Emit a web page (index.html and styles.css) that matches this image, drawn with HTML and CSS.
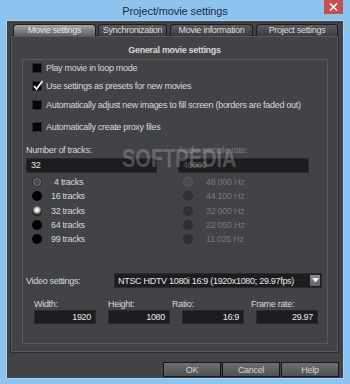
FILE: index.html
```html
<!DOCTYPE html>
<html lang="en">
<head>
  <meta charset="UTF-8" />
  <title>Project/movie settings</title>
  <link rel="stylesheet" href="styles.css">
</head>
<body>

  <div id="janela">
    <div class="titlebar">
      <span class="title">Project/movie settings</span>
      <div class="close">
        <svg width="9" height="8" viewBox="0 0 9 8"><path d="M1 0.5 L8 7.5 M8 0.5 L1 7.5" stroke="#fff" stroke-width="1.6"/></svg>
      </div>
    </div>

    <div class="frame">
      <div class="tabs">
        <div class="tab active t1">Movie settings</div>
        <div class="tab t2">Synchronization</div>
        <div class="tab t3">Movie information</div>
        <div class="tab t4">Project settings</div>
      </div>

      <div class="panel">
        <div class="group-title">General movie settings</div>
        <div class="group">

          <div class="check c1"><span class="box"></span>Play movie in loop mode</div>
          <div class="check c2">
            <span class="box">
              <svg width="12" height="11" viewBox="0 0 12 11"><path d="M2 6 L4.5 9 L10.5 1" fill="none" stroke="#f2f2f2" stroke-width="1.8"/></svg>
            </span>Use settings as presets for new movies
          </div>
          <div class="check c3"><span class="box"></span>Automatically adjust new images to fill screen (borders are faded out)</div>
          <div class="check c4"><span class="box"></span>Automatically create proxy files</div>

          <div class="columns">
            <div class="col">
              <div class="label">Number of tracks:</div>
              <div class="input">32</div>
              <div class="radios">
                <div class="radio"><span class="dot hover"></span><span class="pad">4 tracks</span></div>
                <div class="radio"><span class="dot"></span>16 tracks</div>
                <div class="radio"><span class="dot on"></span>32 tracks</div>
                <div class="radio"><span class="dot"></span>64 tracks</div>
                <div class="radio"><span class="dot"></span>99 tracks</div>
              </div>
            </div>
            <div class="col disabled">
              <div class="label">Audio sample rate:</div>
              <div class="input">48000</div>
              <div class="radios">
                <div class="radio"><span class="dot hover"></span>48 000 Hz</div>
                <div class="radio"><span class="dot"></span>44 100 Hz</div>
                <div class="radio"><span class="dot"></span>32 000 Hz</div>
                <div class="radio"><span class="dot"></span>22 050 Hz</div>
                <div class="radio"><span class="dot"></span>11 025 Hz</div>
              </div>
            </div>
          </div>

          <div class="video-row">
            <span class="label">Video settings:</span>
            <div class="select">
              <span>NTSC HDTV 1080i 16:9 (1920x1080; 29.97fps)</span>
              <span class="arrow">
                <svg width="7" height="5" viewBox="0 0 7 5"><path d="M0 0 H7 L3.5 4.5 Z" fill="#f0f0f0"/></svg>
              </span>
            </div>
          </div>

          <div class="fields">
            <div class="field"><div class="label">Width:</div><div class="input num">1920</div></div>
            <div class="field"><div class="label">Height:</div><div class="input num">1080</div></div>
            <div class="field"><div class="label shift-10">Ratio:</div><div class="input num">16:9</div></div>
            <div class="field"><div class="label shift-5">Frame rate:</div><div class="input num">29.97</div></div>
          </div>

        </div>
      </div>

      <div class="buttons">
        <button class="btn">OK</button>
        <button class="btn">Cancel</button>
        <button class="btn">Help</button>
      </div>
    </div>

    <div class="watermark">SOFTPEDIA</div>
  </div>

</body>
</html>
```

FILE: styles.css
```css
* { margin: 0; padding: 0; box-sizing: border-box; }

body {
  font-family: "Liberation Sans", Arial, sans-serif;
  font-size: 9px;
  letter-spacing: -0.3px;
  color: #d8d8d8;
  background-color: #8dc3ef;
  width: 350px;
  height: 384px;
  overflow: hidden;
  white-space: nowrap;
}

#janela {
  position: relative;
  height: 384px;
}

.titlebar {
  height: 21px;
  display: flex;
  justify-content: center;
  align-items: center;
  position: relative;
}

.title {
  font-family: "Liberation Sans", sans-serif;
  font-size: 11px;
  letter-spacing: -0.1px;
  color: #1f2a36;
  margin-top: 1px;
}

.close {
  position: absolute;
  top: 0;
  right: 7px;
  width: 19px;
  height: 14px;
  background-color: #c84f4f;
  display: flex;
  align-items: center;
  justify-content: center;
}

.frame {
  margin: 0 7px;
  height: 357px;
  background-color: #424346;
  padding-top: 3px;
  box-shadow: 0 0 0 1px #a9d2f3;
}

/* abas */
.tabs {
  display: flex;
  padding-left: 6px;
  height: 12px;
}

.tab {
  height: 12px;
  border: 1px solid #1c1c1e;
  border-bottom: none;
  border-radius: 4px 4px 0 0;
  background: linear-gradient(#5a5b5f, #3b3c3f);
  color: #dcdcdc;
  text-align: center;
  line-height: 11px;
  margin-right: 2px;
}

.tab.active {
  background: linear-gradient(#a2a3a5, #5e5f62);
  color: #e4e4e4;
}

.t1 { width: 83px; }
.t2 { width: 69px; margin-right: 3px; }
.t3 { width: 83px; margin-right: 3px; }
.t4 { width: 82px; }

.panel {
  margin: 0 5px 0 4px;
  height: 316px;
  border: 1px solid #58595c;
  box-shadow: 0 0 0 1px #2c2d2f;
  padding-top: 7px;
}

.group-title {
  text-align: center;
  font-weight: bold;
  height: 12px;
  line-height: 12px;
  margin-bottom: 3px;
}

.group {
  margin: 0 9px 0 10px;
  height: 285px;
  border: 1px solid #595a5d;
  padding: 0 3px;
}

/* caixas de selecao */
.check {
  display: flex;
  align-items: center;
  height: 12px;
  padding-left: 6px;
}

.c1 { margin-top: 2px; }
.c2 { margin-top: 6px; }
.c3 { margin-top: 7px; }
.c4 { margin-top: 10px; }

.box {
  width: 10px;
  height: 10px;
  background-color: #060606;
  border: 1px solid #2a2a2c;
  margin-right: 4px;
  position: relative;
  flex-shrink: 0;
}

.box svg {
  position: absolute;
  left: -1px;
  top: -2px;
}

.columns {
  display: flex;
  gap: 21px;
  margin-top: 11px;
}

.col { width: 131px; }

.label {
  height: 12px;
  line-height: 12px;
}

.input {
  height: 15px;
  background-color: #1d1d1f;
  border: 1px solid #2b2b2d;
  color: #e8e8e8;
  line-height: 13px;
  padding: 0 4px;
  margin-top: 2px;
}

.input.num { text-align: right; }

.radios { margin-top: 2px; }

.radio {
  display: flex;
  align-items: center;
  height: 14.3px;
  padding-left: 6px;
}

.dot {
  width: 10px;
  height: 10px;
  border-radius: 50%;
  background-color: #000;
  margin-right: 9px;
  flex-shrink: 0;
}

.dot.hover {
  background: radial-gradient(circle, #4a4a4a 0 2.5px, #6e6e6e 3.5px, #555 4px, #111 5px);
}

.dot.on {
  background: radial-gradient(circle at 50% 40%, #f4f4f4 0 1.5px, #9a9a9a 3px, #1a1a1a 5px);
}

.pad { padding-left: 3px; }

.disabled { color: #77787b; }
.disabled .input { color: #5c5d60; }
.disabled .radio { padding-left: 5px; }
.disabled .dot { background-color: #2f3032; margin-right: 13px; }
.disabled .dot.hover { background: radial-gradient(circle, #4a4b4d 0 3px, #5c5d5f 5px); }

/* video */
.video-row {
  display: flex;
  align-items: center;
  margin-top: 27px;
}

.video-row .label { width: 88px; }

.select {
  width: 208px;
  height: 15px;
  background-color: #1d1d1f;
  border: 1px solid #2b2b2d;
  color: #e8e8e8;
  display: flex;
  align-items: center;
  justify-content: space-between;
  padding-left: 3px;
}

.arrow {
  width: 10px;
  height: 11px;
  margin-right: 1px;
  background: linear-gradient(#8b8c8f, #606164);
  display: flex;
  align-items: center;
  justify-content: center;
}

.fields {
  display: flex;
  gap: 12px;
  margin-top: 10px;
  padding-left: 8px;
}

.field { width: 62px; }
.field .input { height: 14px; margin-top: 0; line-height: 12px; }
.field .label { height: 12px; }
.shift-10 { margin-left: -10px; }
.shift-5 { margin-left: -5px; }

/* botoes */
.buttons {
  display: flex;
  justify-content: flex-end;
  gap: 1px;
  margin-top: 10px;
  margin-right: 4px;
}

.btn {
  width: 58px;
  height: 15px;
  font-family: inherit;
  font-size: 9px;
  letter-spacing: -0.3px;
  color: #d2d2d2;
  background: linear-gradient(#6e6f72, #505154);
  border: 1px solid #171718;
  cursor: pointer;
}

.watermark {
  position: absolute;
  left: 122px;
  top: 146px;
  font-family: "Liberation Sans", sans-serif;
  font-weight: bold;
  font-size: 20px;
  letter-spacing: 0;
  line-height: 20px;
  transform: scaleY(1.25);
  transform-origin: top left;
  color: rgba(205, 205, 205, 0.3);
}
```
